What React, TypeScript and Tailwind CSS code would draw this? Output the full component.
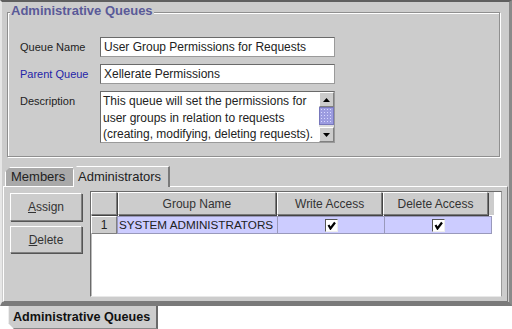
import React from "react";

function Check() {
  return (
    <div className="w-[13px] h-[13px] bg-white border border-t-[#555] border-l-[#555] border-b-[#eee] border-r-[#eee] flex items-center justify-center">
      <svg width="9" height="9" viewBox="0 0 9 9">
        <path d="M1.5 4 L3.5 7.5 L8 1.5" stroke="#000" strokeWidth="2.2" fill="none" />
      </svg>
    </div>
  );
}

function HeaderCell({ w, label }: { w: string; label?: string }) {
  return (
    <div
      className={`${w} h-[23px] bg-[#cccccc] border border-t-white border-l-white border-b-[#7a7a7a] border-r-[#7a7a7a] shadow-[1px_1px_0_#444] flex items-center justify-center text-[12px] text-[#333]`}
    >
      {label}
    </div>
  );
}

function SideButton({ first, rest, h }: { first: string; rest: string; h: string }) {
  return (
    <div className={`w-[72px] ${h} bg-[#cccccc] border border-t-white border-l-white border-b-[#808080] border-r-[#808080] shadow-[1px_1px_0_#555] flex items-center justify-center text-[12px] text-[#333]`}>
      <span>
        <span className="underline">{first}</span>
        {rest}
      </span>
    </div>
  );
}

export default function App() {
  const desc = [
    "This queue will set the permissions for",
    "user groups in relation to requests",
    "(creating, modifying, deleting requests).",
  ];

  return (
    <div className="w-[512px] h-[329px] bg-white overflow-hidden font-['Liberation_Sans',Arial,sans-serif] text-black">
      <div className="h-[306px] bg-[#cccccc] border-t-2 border-t-[#5f5f5f] border-l-2 border-l-[#e6e6e6] border-r-[3px] border-r-[#8a8a8a] border-b-[4px] border-b-[#7a7a7a] flex flex-col">
        {/* group box */}
        <div className="relative ml-[5px] mt-[10px] w-[493px] h-[145px] border border-[#8f8f8f] shadow-[inset_1px_1px_0_#fff,1px_1px_0_#fff]">
          <span className="absolute left-[2px] -top-[10px] px-[1px] bg-[#cccccc] font-bold text-[13px] leading-[16px] text-[#5a5a98] whitespace-nowrap">
            Administrative Queues
          </span>
          <div className="pt-[24px] pl-[12px] flex flex-col gap-[7px]">
            <div className="flex items-center">
              <div className="w-[80px] text-[11px] text-[#222]">Queue Name</div>
              <div className="w-[235px] h-[20px] bg-white border border-[#9a9a9a] border-t-[#6a6a6a] border-l-[#6a6a6a] pl-[3px] text-[12px] leading-[18px] text-[#222]">
                User Group Permissions for Requests
              </div>
            </div>
            <div className="flex items-center">
              <div className="w-[80px] text-[11px] text-[#2424a8]">Parent Queue</div>
              <div className="w-[235px] h-[20px] bg-white border border-[#9a9a9a] border-t-[#6a6a6a] border-l-[#6a6a6a] pl-[3px] text-[12px] leading-[18px] text-[#222]">
                Xellerate Permissions
              </div>
            </div>
            <div className="flex items-start">
              <div className="w-[80px] pt-[2px] text-[11px] text-[#222]">Description</div>
              <div className="w-[235px] h-[52px] bg-white border border-[#9a9a9a] border-t-[#6a6a6a] border-l-[#6a6a6a] flex">
                <div className="flex-1 pl-[2px] pt-[1px] text-[12px] leading-[16.5px] text-[#222] whitespace-nowrap overflow-hidden">
                  {desc.map((l) => (
                    <div key={l}>{l}</div>
                  ))}
                </div>
                <div className="w-[15px] flex flex-col">
                  <div className="h-[15px] bg-[#cccccc] border border-t-white border-l-white border-b-[#808080] border-r-[#808080] flex items-center justify-center">
                    <svg width="7" height="4" viewBox="0 0 7 4"><path d="M0 4 L3.5 0 L7 4Z" fill="#000" /></svg>
                  </div>
                  <div className="h-[18px] bg-[#9c9ce0] border border-[#7777bb] bg-[radial-gradient(#d8d8ff_0.6px,transparent_0.8px)] [background-size:3px_3px]" />
                  <div className="flex-1 bg-[#dcdcdc]" />
                  <div className="h-[15px] bg-[#cccccc] border border-t-white border-l-white border-b-[#808080] border-r-[#808080] flex items-center justify-center">
                    <svg width="7" height="4" viewBox="0 0 7 4"><path d="M0 0 L3.5 4 L7 0Z" fill="#000" /></svg>
                  </div>
                </div>
              </div>
            </div>
          </div>
        </div>

        {/* tabs */}
        <div className="mt-[9px] h-[20px] flex items-end ml-[3px]">
          <div className="w-[68px] h-[19px] bg-[#a9a9a9] border-t border-l border-white [clip-path:polygon(5px_0,100%_0,100%_100%,0_100%,0_5px)] flex items-center pl-[5px] text-[13px] text-[#222]">
            Members
          </div>
          <div className="w-[97px] h-[21px] bg-[#cccccc] border-t border-l border-white border-r-2 border-r-[#7a7a7a] [clip-path:polygon(4px_0,100%_0,100%_100%,0_100%,0_4px)] flex items-center pl-[4px] text-[13px] text-[#222] -mb-[1px] relative z-10">
            Administrators
          </div>
        </div>

        {/* tab content */}
        <div className="ml-[1px] mr-[1px] h-[116px] border border-t-white border-l-white border-r-[#7a7a7a] border-b-[#7a7a7a] flex pt-[4px] pl-[6px] gap-[8px]">
          <div className="flex flex-col gap-[5px] pt-[2px]">
            <SideButton first="A" rest="ssign" h="h-[28px]" />
            <SideButton first="D" rest="elete" h="h-[27px]" />
          </div>
          <div className="w-[412px] h-[106px] bg-white border border-t-[#6a6a6a] border-l-[#6a6a6a] border-b-[#e8e8e8] border-r-[#9a9a9a] shadow-[inset_1px_0_0_#bbb]">
            <div className="flex bg-[#cccccc] pr-[6px] gap-[1px] w-[403px]">
              <HeaderCell w="w-[26px]" />
              <HeaderCell w="w-[160px]" label="Group Name" />
              <HeaderCell w="w-[106px]" label="Write Access" />
              <HeaderCell w="w-[106px]" label="Delete Access" />
            </div>
            <div className="flex mt-[1px] h-[18px] w-[402px]">
              <div className="w-[26px] bg-[#cccccc] border border-t-white border-l-white border-b-[#808080] border-r-[#808080] flex items-center justify-center text-[12px] text-[#222]">
                1
              </div>
              <div className="w-[161px] bg-[#ccccff] border border-[#9999bb] pl-[1px] text-[11.7px] leading-[16px] text-[#222] whitespace-nowrap">
                SYSTEM ADMINISTRATORS
              </div>
              <div className="w-[107px] bg-[#ccccff] border-y border-r border-[#9999bb] flex items-center justify-center">
                <Check />
              </div>
              <div className="w-[107px] bg-[#ccccff] border-y border-r border-[#9999bb] flex items-center justify-center">
                <Check />
              </div>
            </div>
          </div>
        </div>
      </div>

      {/* bottom tab */}
      <div className="ml-[8px] w-[150px] h-[23px] bg-[#cccccc] border-l border-l-[#eee] border-r-2 border-r-[#6a6a6a] border-b border-b-[#888] [clip-path:polygon(0_0,100%_0,100%_100%,6px_100%,0_calc(100%-6px))] flex items-center pl-[4px] font-bold text-[12.6px] text-[#111] whitespace-nowrap">
        Administrative Queues
      </div>
    </div>
  );
}
